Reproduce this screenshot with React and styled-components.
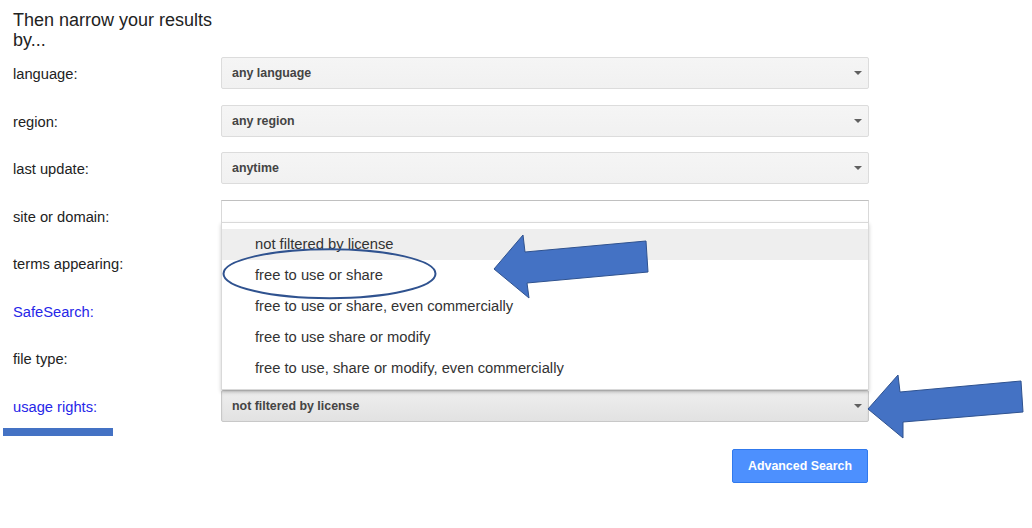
import React from "react";
import styled, { createGlobalStyle, css } from "styled-components";

const GlobalStyle = createGlobalStyle`
  html, body { margin: 0; padding: 0; background: #fff; }
  body { font-family: "Liberation Sans", Arial, sans-serif; }
`;

const Page = styled.div`
  position: relative;
  width: 1032px;
  height: 528px;
  box-sizing: border-box;
  padding: 10px 0 0 13px;
  overflow: hidden;
`;

const Title = styled.h2`
  margin: 0;
  width: 208px;
  font-size: 18px;
  line-height: 20px;
  font-weight: normal;
  color: #222;
`;

const Form = styled.div`
  margin-top: 7px;
  display: grid;
  grid-template-columns: 208px 648px;
  grid-auto-rows: 32px;
  row-gap: 15.57px;
`;

const Label = styled.div`
  display: flex;
  align-items: center;
  padding-top: 2px;
  font-size: 14.7px;
  color: ${(p) => (p.$link ? "#2626e8" : "#222")};
`;

const Select = styled.div`
  position: relative;
  box-sizing: border-box;
  height: 100%;
  display: flex;
  align-items: center;
  padding: 0 10px;
  border-radius: 2px;
  font-size: 12.4px;
  font-weight: bold;
  color: #444;
  background: linear-gradient(#f5f5f5, #f1f1f1);
  border: 1px solid #dcdcdc;
  &::after {
    content: "";
    position: absolute;
    right: 6px;
    top: 50%;
    margin-top: -2px;
    border-left: 4px solid transparent;
    border-right: 4px solid transparent;
    border-top: 4px solid #606060;
  }
  ${(p) =>
    p.$open &&
    css`
      background: linear-gradient(#eeeeee, #e2e2e2);
      border-color: #c8c8c8;
      box-shadow: inset 0 1px 2px rgba(0, 0, 0, 0.08);
    `}
`;

const TextInput = styled.div`
  box-sizing: border-box;
  height: 100%;
  background: #fff;
  border: 1px solid #d9d9d9;
  border-top-color: #c0c0c0;
`;

const Menu = styled.div`
  position: absolute;
  left: -1px;
  right: -1px;
  bottom: calc(100% + 1px);
  z-index: 2;
  background: #fff;
  border: 1px solid rgba(0, 0, 0, 0.15);
  box-shadow: 0 2px 4px rgba(0, 0, 0, 0.2);
  padding: 6px 0 5px;
`;

const Item = styled.div`
  height: 31px;
  display: flex;
  align-items: center;
  padding-left: 33px;
  font-size: 14.75px;
  font-weight: normal;
  color: #333;
  background: ${(p) => (p.$hover ? "#eeeeee" : "transparent")};
`;

const Actions = styled.div`
  width: 855px;
  margin-top: 27px;
  display: flex;
  justify-content: flex-end;
`;

const Button = styled.button`
  width: 136px;
  height: 34px;
  border-radius: 2px;
  border: 1px solid #3079ed;
  background: #4d90fe;
  color: #fff;
  font-family: "Liberation Sans", Arial, sans-serif;
  font-size: 12.4px;
  font-weight: bold;
  padding: 0;
`;

const Overlay = styled.svg`
  position: absolute;
  top: 0;
  left: 0;
  pointer-events: none;
  z-index: 5;
`;

const licenses = [
  "not filtered by license",
  "free to use or share",
  "free to use or share, even commercially",
  "free to use share or modify",
  "free to use, share or modify, even commercially",
];

export default function App() {
  return (
    <>
      <GlobalStyle />
      <Page>
        <Title>Then narrow your results by...</Title>
        <Form>
          <Label>language:</Label>
          <Select>any language</Select>
          <Label>region:</Label>
          <Select>any region</Select>
          <Label>last update:</Label>
          <Select>anytime</Select>
          <Label>site or domain:</Label>
          <TextInput />
          <Label>terms appearing:</Label>
          <Select />
          <Label $link>SafeSearch:</Label>
          <Select />
          <Label>file type:</Label>
          <Select />
          <Label $link>usage rights:</Label>
          <Select $open>
            not filtered by license
            <Menu>
              {licenses.map((l, i) => (
                <Item key={l} $hover={i === 0}>
                  {l}
                </Item>
              ))}
            </Menu>
          </Select>
        </Form>
        <Actions>
          <Button>Advanced Search</Button>
        </Actions>
        <Overlay width="1032" height="528" viewBox="0 0 1032 528">
          <ellipse cx="329.5" cy="273.7" rx="106" ry="24.5" fill="none" stroke="#2f528f" strokeWidth="2" />
          <polygon
            points="494,269 523,235 525,252 646,241 648,272 527,283 529,298"
            fill="#4472c4"
            stroke="#2f528f"
            strokeWidth="1"
          />
          <polygon
            points="868,409 898,375 900,392 1021,381 1023,412 903,422 903,438"
            fill="#4472c4"
            stroke="#2f528f"
            strokeWidth="1"
          />
          <rect x="3" y="428" width="110" height="8" fill="#4472c4" />
        </Overlay>
      </Page>
    </>
  );
}
